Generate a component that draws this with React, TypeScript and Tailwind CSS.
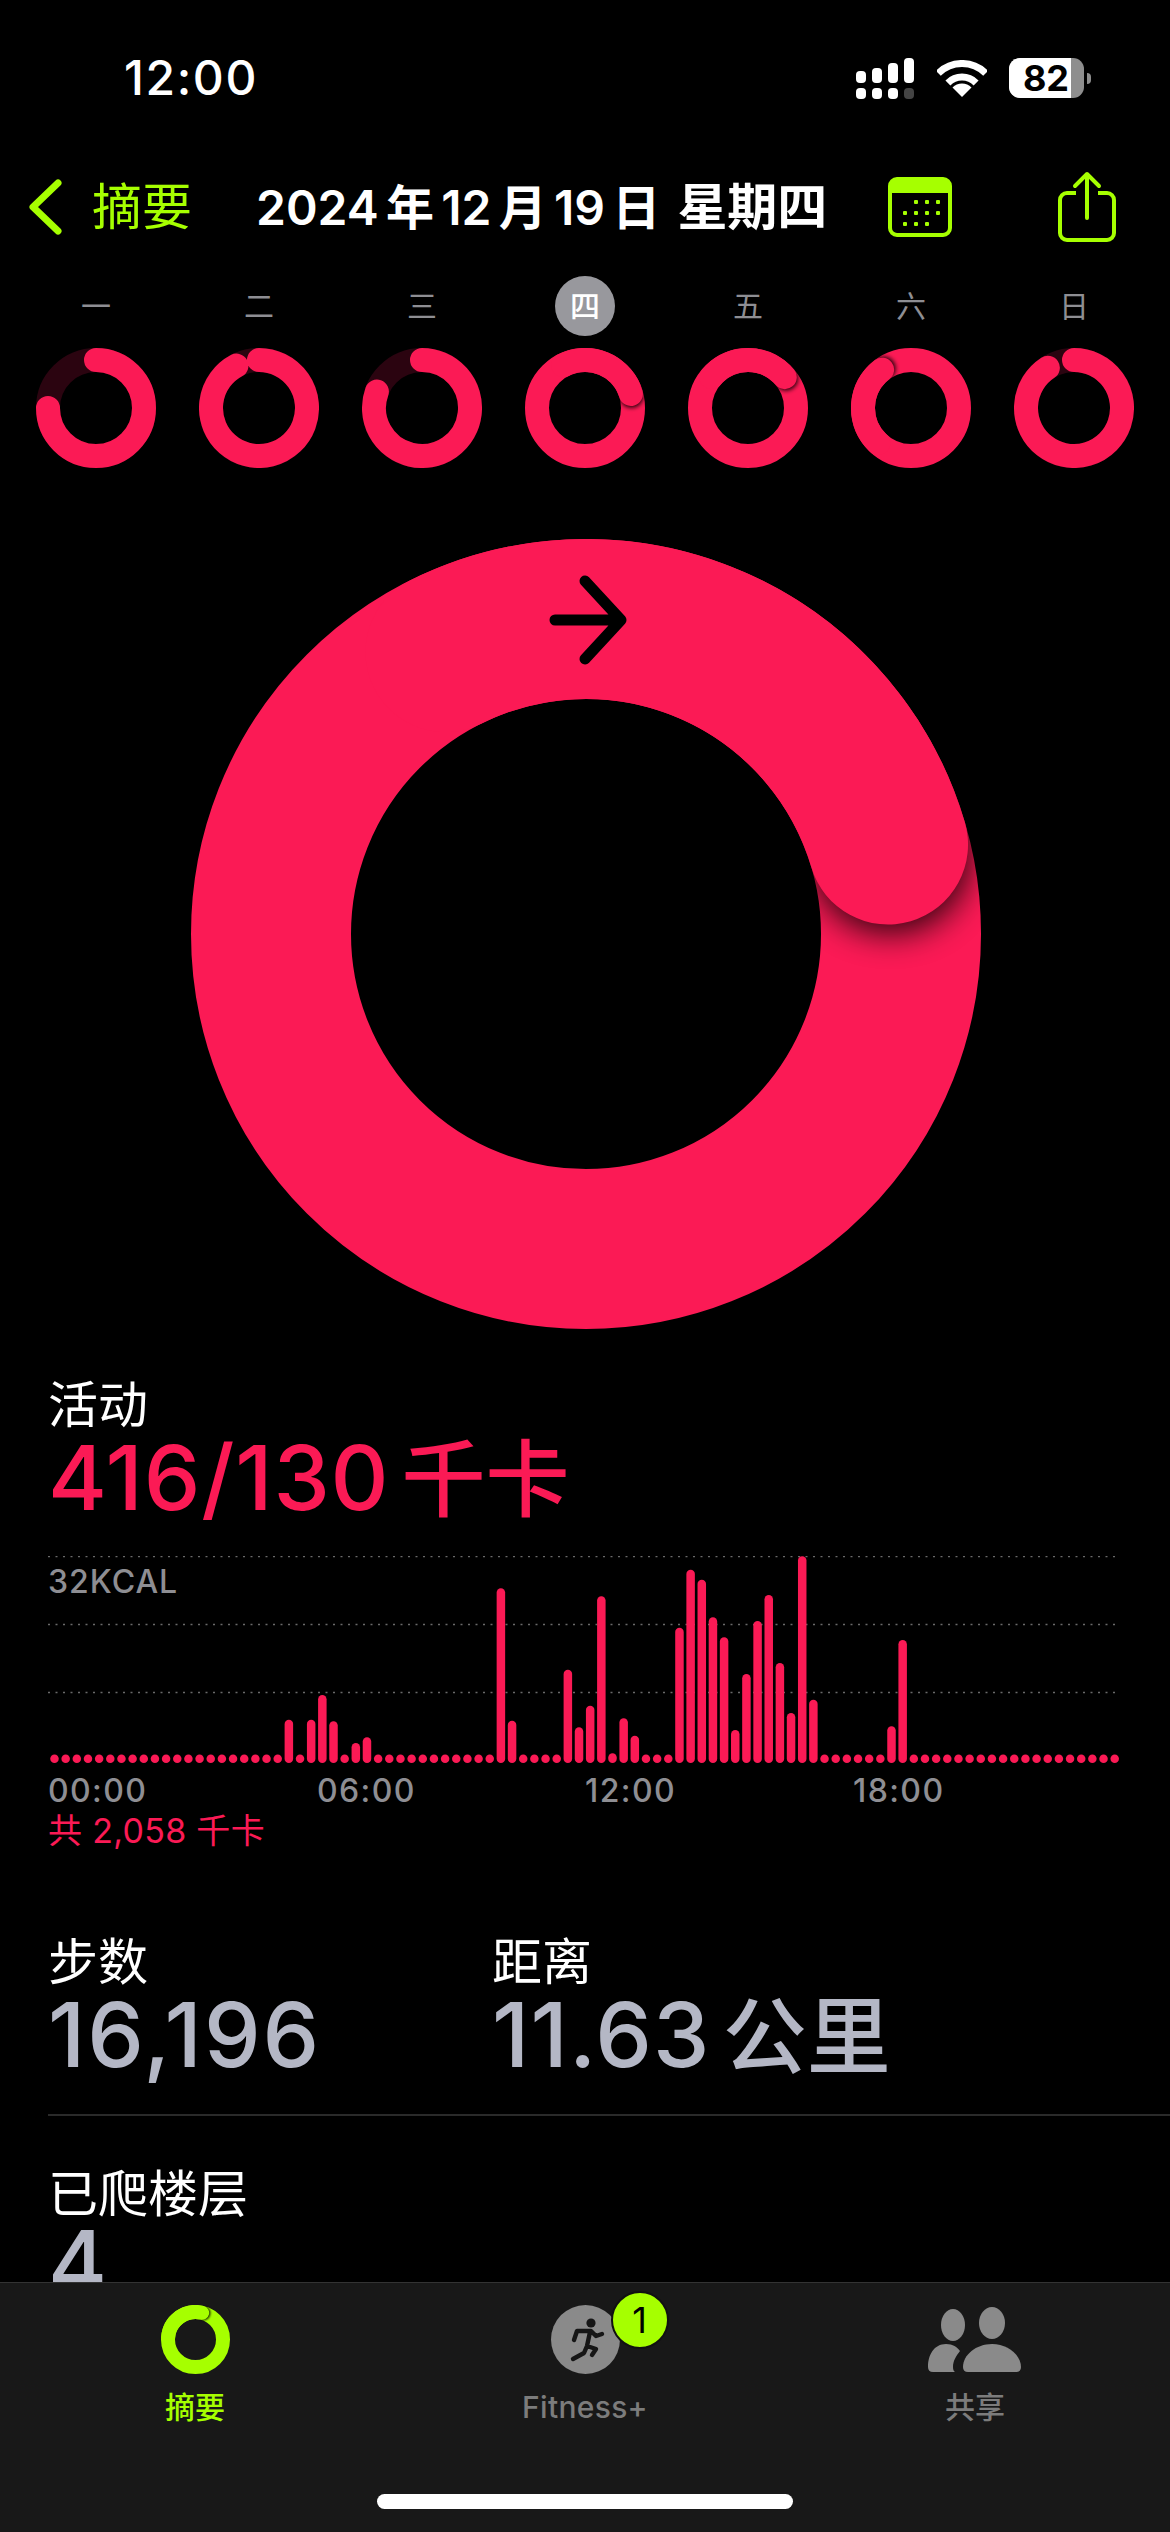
const pink = "#FB1A55";
const toRad = (deg: number) => ((deg - 90) * Math.PI) / 180;

function polar(c: number, r: number, deg: number) {
  return { x: c + r * Math.cos(toRad(deg)), y: c + r * Math.sin(toRad(deg)) };
}

function arc(c: number, r: number, from: number, to: number) {
  const a = polar(c, r, from);
  const b = polar(c, r, to);
  const large = to - from > 180 ? 1 : 0;
  return `M ${a.x} ${a.y} A ${r} ${r} 0 ${large} 1 ${b.x} ${b.y}`;
}

// angle is in degrees from 12 o'clock, over 360 means the ring has lapped itself
function Ring({ size, stroke, angle, color = pink, id, blur, children }: {
  size: number; stroke: number; angle: number; color?: string; id: string; blur: number; children?: React.ReactNode;
}) {
  const c = size / 2;
  const r = c - stroke / 2;
  const lapped = angle >= 360;
  const end = angle % 360;
  const offset = ((blur * 0.45 + 1) / r) * (180 / Math.PI);
  const shadow = polar(c, r, end + offset);
  return (
    <svg width={size} height={size} viewBox={`0 0 ${size} ${size}`} className="block">
      <defs>
        <filter id={id} x="-50%" y="-50%" width="200%" height="200%">
          <feGaussianBlur stdDeviation={blur} />
        </filter>
      </defs>
      {lapped ? (
        <>
          <circle cx={c} cy={c} r={r} fill="none" stroke={color} strokeWidth={stroke} />
          <circle cx={shadow.x} cy={shadow.y} r={stroke / 2} fill="#000" opacity={0.85} filter={`url(#${id})`} />
          <path d={arc(c, r, end - 100, end)} fill="none" stroke={color} strokeWidth={stroke} strokeLinecap="round" />
        </>
      ) : (
        <>
          <circle cx={c} cy={c} r={r} fill="none" stroke="#2B0410" strokeWidth={stroke} />
          <path d={arc(c, r, 0, end)} fill="none" stroke={color} strokeWidth={stroke} strokeLinecap="round" />
        </>
      )}
      {children}
    </svg>
  );
}

const days = [
  { label: "一", angle: 270 },
  { label: "二", angle: 332 },
  { label: "三", angle: 290 },
  { label: "四", angle: 433, active: true },
  { label: "五", angle: 410 },
  { label: "六", angle: 683 },
  { label: "日", angle: 327 },
];

const barTops: Record<number, number> = {
  21: 1082, 23: 1082, 24: 1008, 25: 1087, 27: 1152, 28: 1135,
  40: 688, 41: 1085, 46: 932, 47: 1105, 48: 1040, 49: 712, 50: 1183, 51: 1078, 52: 1130,
  56: 806, 57: 632, 58: 662, 59: 775, 60: 835, 61: 1113, 62: 945, 63: 786, 64: 708,
  65: 912, 66: 1062, 67: 592, 68: 1022, 75: 1102, 76: 843,
};

function ActivityChart() {
  const bottom = 207;
  return (
    <svg width="1074" height="210" viewBox="0 0 1074 210" className="block">
      {[0.5, 68.5, 136.5].map((y) => (
        <line key={y} x1="0" x2="1072" y1={y} y2={y} stroke="#6A6A6A" strokeWidth="1.5" strokeDasharray="2 5.5" />
      ))}
      {Array.from({ length: 96 }, (_, i) => {
        const h = barTops[i] ? (1212 - barTops[i]) / 3 : 8.5;
        return <rect key={i} x={2.25 + i * 11.16} y={bottom - h} width="8.5" height={h} rx="4.25" fill={pink} />;
      })}
    </svg>
  );
}

function StatusIcons() {
  return (
    <div className="flex items-center">
      <svg width="58" height="41" viewBox="0 0 58 41" className="block">
        <rect x="0" y="13" width="10" height="12" rx="4" fill="#fff" />
        <rect x="16" y="10" width="10" height="15" rx="4" fill="#fff" />
        <rect x="32" y="5" width="10" height="20" rx="4" fill="#fff" />
        <rect x="48" y="0" width="10" height="25" rx="4" fill="#fff" />
        <rect x="0" y="30" width="10" height="11" rx="4" fill="#fff" />
        <rect x="16" y="30" width="10" height="11" rx="4" fill="#fff" />
        <rect x="32" y="30" width="10" height="11" rx="4" fill="#fff" />
        <rect x="48" y="30" width="10" height="11" rx="4" fill="#444" />
      </svg>
      <svg width="50" height="37" viewBox="0 0 50 37" className="block ml-[23px]">
        <path d="M 1.3 13.3 A 33.5 33.5 0 0 1 48.7 13.3" fill="none" stroke="#fff" strokeWidth="7" />
        <path d="M 10.9 22.9 A 20 20 0 0 1 39.1 22.9" fill="none" stroke="#fff" strokeWidth="7" />
        <path d="M 25 37 L 15.5 27.5 A 13.4 13.4 0 0 1 34.5 27.5 Z" fill="#fff" />
      </svg>
      <div className="ml-[22px] flex items-center">
        <div className="w-[75px] h-[40px] rounded-[11px] overflow-hidden flex bg-[#8E8E8E]">
          <div className="w-[62px] h-full bg-white flex items-center justify-end pr-[2px] text-black text-[36px] leading-none font-bold">82</div>
        </div>
        <div className="w-[4px] h-[11px] ml-[3px] rounded-r-full bg-[#8E8E8E]" />
      </div>
    </div>
  );
}

function Stat({ label, value, unit, className, valueClass = "tracking-[1.2px]" }: {
  label: string; value: string; unit?: string; className?: string; valueClass?: string;
}) {
  return (
    <div className={className}>
      <div className="text-[50px] leading-[56px] text-white">{label}</div>
      <div className={`text-[90px] leading-[90px] font-medium text-[#B4B7C5] whitespace-nowrap ${valueClass}`}>
        {value}
        {unit && <span className="ml-[12px] text-[84px] tracking-normal">{unit}</span>}
      </div>
    </div>
  );
}

export default function App() {
  return (
    <div className="w-[1170px] h-[2532px] bg-black flex flex-col overflow-hidden font-['Inter','Noto_Sans_CJK_SC',sans-serif]">
      <div className="flex-1 min-h-0 overflow-hidden">
        {/* status bar */}
        <div className="h-[156px] flex items-center justify-between pl-[124px] pr-[79px]">
          <div className="text-white text-[48px] font-medium leading-none tracking-[1.6px]">12:00</div>
          <StatusIcons />
        </div>

        {/* nav */}
        <div className="h-[102px] flex items-center pl-[28px]">
          <svg width="34" height="56" viewBox="0 0 34 56" className="block">
            <path d="M 30 4 L 5 28 L 30 52" fill="none" stroke="#A6FF00" strokeWidth="7" strokeLinecap="round" strokeLinejoin="round" />
          </svg>
          <div className="ml-[30px] w-[164px] text-[#A6FF00] text-[50px] leading-none">摘要</div>
          <div className="text-white text-[48px] leading-none font-semibold whitespace-nowrap w-[632px] [word-spacing:-4.8px]">
            2024 年 12 月 19 日<span className="ml-[17px] text-[50px]">星期四</span>
          </div>
          <svg width="64" height="60" viewBox="0 0 64 60" className="block">
            <rect x="2" y="2" width="60" height="56" rx="7" fill="none" stroke="#A6FF00" strokeWidth="4" />
            <path d="M 2 16 V 9 A 7 7 0 0 1 9 2 H 55 A 7 7 0 0 1 62 9 V 16 Z" fill="#A6FF00" />
            {[[26, 23], [37, 23], [48, 23], [15, 34], [26, 34], [37, 34], [48, 34], [15, 45], [26, 45], [37, 45]].map(([x, y]) => (
              <rect key={`${x}-${y}`} x={x} y={y} width="4" height="4" rx="1" fill="#A6FF00" />
            ))}
          </svg>
          <svg width="58" height="72" viewBox="0 0 58 72" className="block ml-[106px]">
            <path d="M 18 22 H 9 A 7 7 0 0 0 2 29 V 62 A 7 7 0 0 0 9 69 H 49 A 7 7 0 0 0 56 62 V 29 A 7 7 0 0 0 49 22 H 40" fill="none" stroke="#A6FF00" strokeWidth="4" />
            <path d="M 29 47 V 3 M 17 15 L 29 3 L 41 15" fill="none" stroke="#A6FF00" strokeWidth="4" strokeLinecap="round" strokeLinejoin="round" />
          </svg>
        </div>

        {/* week */}
        <div className="mt-[18px] grid grid-cols-7 px-[14.5px]">
          {days.map((d) => (
            <div key={d.label} className="flex flex-col items-center">
              <div className={`w-[60px] h-[60px] rounded-full flex items-center justify-center text-[30px] leading-none ${d.active ? "bg-[#98989D] text-white font-medium" : "text-[#8E8E93]"}`}>
                {d.label}
              </div>
              <div className="mt-[12px]">
                <Ring size={120} stroke={24} angle={d.angle} id={`day-${d.label}`} blur={2} />
              </div>
            </div>
          ))}
        </div>

        {/* main ring */}
        <div className="mt-[71px] ml-[191px] w-[790px]">
          <Ring size={790} stroke={160} angle={433.5} id="main-ring" blur={17}>
            <path d="M 364 81 H 428 M 394 42 L 430 81 L 394 120" fill="none" stroke="#000" strokeWidth="11" strokeLinecap="round" strokeLinejoin="round" />
          </Ring>
        </div>

        {/* activity */}
        <div className="mt-[48px] pl-[48px]">
          <div className="text-[50px] leading-[56px] text-white">活动</div>
          <div className="text-[90px] leading-[90px] font-medium tracking-[0.8px] text-[#FB1A55] whitespace-nowrap">
            416/130<span className="ml-[12px] text-[84px] tracking-normal">千卡</span>
          </div>
          <div className="relative mt-[31px]">
            <ActivityChart />
            <div className="absolute left-0 top-[8px] text-[32px] leading-[36px] font-medium tracking-[1px] text-[#8E8E93]">32KCAL</div>
          </div>
          <div className="mt-[7px] flex text-[32px] leading-[36px] font-medium tracking-[1.4px] text-[#8E8E93]">
            <div className="w-[269px]">00:00</div>
            <div className="w-[268px]">06:00</div>
            <div className="w-[268px]">12:00</div>
            <div>18:00</div>
          </div>
          <div className="mt-[2px] text-[34px] leading-[40px] tracking-[0.3px] text-[#FB1A55]">共 2,058 千卡</div>
        </div>

        {/* steps / distance */}
        <div className="mt-[83px] pl-[48px] flex">
          <Stat label="步数" value="16,196" className="w-[444px]" valueClass="tracking-[2px]" />
          <Stat label="距离" value="11.63" unit="公里" />
        </div>
        <div className="mt-[32px] ml-[48px] border-t-2 border-[#2A2A2A]" />
        <div className="mt-[50px] pl-[48px]">
          <Stat label="已爬楼层" value="4" valueClass="-mt-[4px]" />
        </div>
      </div>

      {/* tab bar */}
      <div className="h-[250px] shrink-0 bg-[#181818] border-t border-[#333] relative">
        <div className="grid grid-cols-3 pt-[22px]">
          <div className="flex flex-col items-center w-[390px]">
            <Ring size={69} stroke={14} angle={374} color="#A6FF00" id="tab-ring" blur={0.8} />
            <div className="mt-[15px] text-[30px] leading-[36px] font-medium text-[#A6FF00]">摘要</div>
          </div>
          <div className="flex flex-col items-center w-[390px]">
            <div className="relative w-[69px] h-[69px] rounded-full bg-[#8A8A8A] flex items-center justify-center">
              <svg width="40" height="48" viewBox="0 0 40 48" className="block">
                <circle cx="26" cy="7" r="4.6" fill="#161616" />
                <path d="M 9 24 L 12 15 H 26 L 31 20 L 37 18 M 25 16 L 22 30 L 19 37 L 8 43 M 22 30 L 31 33 L 27 39" fill="none" stroke="#161616" strokeWidth="4.4" strokeLinecap="round" strokeLinejoin="round" />
              </svg>
              <div className="absolute left-[60px] -top-[14px] w-[58px] h-[58px] rounded-full bg-[#A6FF00] border-2 border-[#111] flex items-center justify-center text-[36px] leading-none font-normal text-black">1</div>
            </div>
            <div className="mt-[15px] text-[30px] leading-[36px] font-medium tracking-[0.3px] text-[#7C7C7C]">Fitness+</div>
          </div>
          <div className="flex flex-col items-center w-[390px]">
            <svg width="94" height="69" viewBox="0 0 94 69" className="block">
              <ellipse cx="25" cy="20" rx="12" ry="16" fill="#8A8A8A" />
              <ellipse cx="64" cy="18" rx="13" ry="16" fill="#8A8A8A" />
              <path d="M 0 62 C 0 50 6 39 18 39 C 25 39 29 42 32 46 C 28 51 25 56 25 62 Q 25 66 27 67 H 5 Q 0 67 0 62 Z" fill="#8A8A8A" />
              <path d="M 35 62 C 35 50 48 39 64 39 C 80 39 93 50 93 62 Q 93 67 88 67 H 40 Q 35 67 35 62 Z" fill="#8A8A8A" />
            </svg>
            <div className="mt-[15px] text-[30px] leading-[36px] font-medium text-[#7C7C7C]">共享</div>
          </div>
        </div>
        <div className="absolute left-[377px] top-[211px] w-[416px] h-[15px] rounded-full bg-white" />
      </div>
    </div>
  );
}
